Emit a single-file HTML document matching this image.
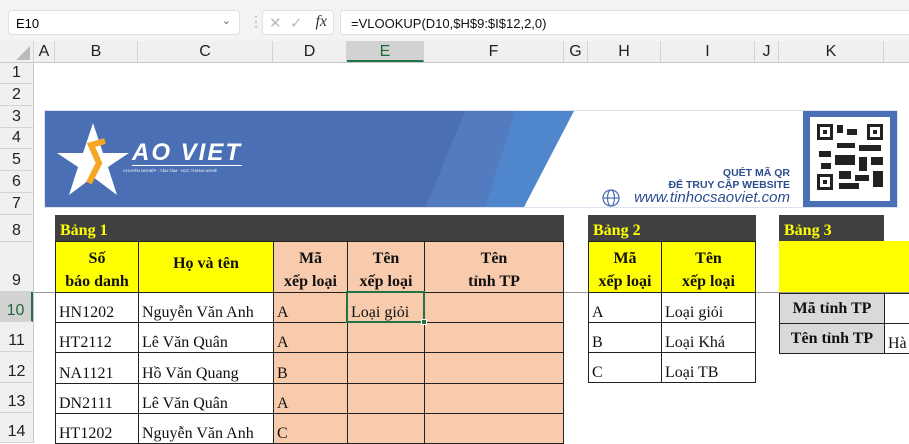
<!DOCTYPE html>
<html><head><meta charset="utf-8"><style>
*{margin:0;padding:0;box-sizing:border-box}
body{width:909px;height:443px;overflow:hidden;background:#fff;position:relative;font-family:"Liberation Serif",serif}
.a{position:absolute}
.s{font-family:"Liberation Sans",sans-serif}
.ch{position:absolute;top:41px;height:21px;border-right:1px solid #d4d4d4;background:#f0f0f0;font:16px "Liberation Sans",sans-serif;color:#222;text-align:center;line-height:21px}
.rh{position:absolute;left:0;width:33px;border-bottom:1px solid #d4d4d4;background:#f0f0f0;font:16px "Liberation Sans",sans-serif;color:#222;text-align:center;display:flex;align-items:flex-end;justify-content:center;padding-bottom:1px}
.c{position:absolute;border:1px solid #222;font-size:16px;color:#111;display:flex;align-items:flex-end;padding:0 3px 0 3px;line-height:19px}
.h{background:#ffff00;font-weight:bold;justify-content:center;text-align:center;align-items:center;line-height:23px;padding-top:5px}
.o{background:#f8cbad}
.dk{position:absolute;background:#404040;color:#ffff00;font-weight:bold;font-size:16px;padding:7px 0 0 5px;line-height:18px}
.gr{background:#d9d9d9;font-weight:bold;justify-content:center;align-items:center}
</style></head><body>
<div class="a" style="left:0;top:0;width:909px;height:41px;background:#f3f3f3"></div>
<div class="a s" style="left:8px;top:10px;width:232px;height:25px;background:#fff;border:1px solid #e0e0e0;border-radius:4px;font-size:13px;padding:5px 0 0 7px">E10<span style="position:absolute;right:8px;top:3px;color:#666;font-size:11px">&#8964;</span></div>
<div class="a s" style="left:249px;top:13px;color:#aaa;font-size:14px">&#8942;</div>
<div class="a" style="left:262px;top:10px;width:72px;height:25px;background:#fff;border:1px solid #e0e0e0;border-radius:4px;color:#bbb;font:15px 'Liberation Sans',sans-serif;padding:3px 0 0 6px">&#10005;&nbsp;&nbsp;&#10003;<span style="color:#333;font:italic 16px 'Liberation Serif',serif;position:absolute;right:6px;top:2px">fx</span></div>
<div class="a s" style="left:340px;top:10px;width:580px;height:25px;background:#fff;border:1px solid #e0e0e0;border-radius:4px;font-size:13px;padding:5px 0 0 10px;color:#111">=VLOOKUP(D10,$H$9:$I$12,2,0)</div>
<div class="ch" style="left:0;width:34px"><span style="position:absolute;left:16px;top:5px;width:0;height:0;border-left:14px solid transparent;border-bottom:14px solid #bbb"></span></div>
<div class="ch" style="left:34px;width:21px">A</div>
<div class="ch" style="left:55px;width:83px">B</div>
<div class="ch" style="left:138px;width:135px">C</div>
<div class="ch" style="left:273px;width:74px">D</div>
<div class="ch" style="left:347px;width:77px;background:#d2d2d2;color:#1e6b3a;border-bottom:2px solid #217346">E</div>
<div class="ch" style="left:424px;width:140px">F</div>
<div class="ch" style="left:564px;width:24px">G</div>
<div class="ch" style="left:588px;width:73px">H</div>
<div class="ch" style="left:661px;width:94px">I</div>
<div class="ch" style="left:755px;width:24px">J</div>
<div class="ch" style="left:779px;width:105px">K</div>
<div class="ch" style="left:884px;width:30px"></div>
<div class="a" style="left:0;top:62px;width:909px;height:1px;background:#c8c8c8"></div>
<div class="rh" style="top:63px;height:21px">1</div>
<div class="rh" style="top:84px;height:22px">2</div>
<div class="rh" style="top:106px;height:22px">3</div>
<div class="rh" style="top:128px;height:21px">4</div>
<div class="rh" style="top:149px;height:22px">5</div>
<div class="rh" style="top:171px;height:22px">6</div>
<div class="rh" style="top:193px;height:22px">7</div>
<div class="rh" style="top:215px;height:27px">8</div>
<div class="rh" style="top:242px;height:50px">9</div>
<div class="rh" style="top:292px;height:30px;background:#d2d2d2;color:#1e6b3a;border-right:2px solid #217346">10</div>
<div class="rh" style="top:322px;height:30px">11</div>
<div class="rh" style="top:352px;height:31px">12</div>
<div class="rh" style="top:383px;height:30px">13</div>
<div class="rh" style="top:413px;height:30px">14</div>
<div class="a" style="left:33px;top:62px;width:1px;height:381px;background:#c8c8c8"></div>
<div class="a" style="left:34px;top:292px;width:875px;height:1px;background:#999"></div>
<div class="a" style="left:44px;top:110px;width:854px;height:98px;background:#fff;border:1px solid #dde3ee;overflow:hidden">
<svg width="854" height="98" style="position:absolute;left:0;top:0">
<polygon points="0,0 480,0 440,98 0,98" fill="#4a6fb5"/>
<polygon points="420,0 500,0 460,98 380,98" fill="#5580c4" opacity="0.7"/>
<polygon points="470,0 529,0 478,98 440,98" fill="#4f86cc"/>
<rect x="758" y="0" width="96" height="98" fill="#4a6fb5"/>
<rect x="765" y="6" width="80" height="84" fill="#fff"/>
<g fill="#222">
<rect x="772" y="13" width="16" height="16"/><rect x="822" y="13" width="16" height="16"/><rect x="772" y="63" width="16" height="16"/>
<rect x="792" y="14" width="6" height="8"/><rect x="802" y="18" width="10" height="6"/><rect x="792" y="32" width="18" height="5"/><rect x="814" y="34" width="22" height="6"/>
<rect x="774" y="40" width="12" height="6"/><rect x="790" y="44" width="20" height="10"/><rect x="814" y="46" width="8" height="14"/><rect x="826" y="46" width="12" height="8"/>
<rect x="776" y="52" width="10" height="6"/><rect x="794" y="60" width="12" height="8"/><rect x="810" y="64" width="14" height="6"/><rect x="828" y="60" width="10" height="16"/><rect x="794" y="72" width="20" height="6"/>
</g>
<g fill="#fff"><rect x="775" y="16" width="10" height="10"/><rect x="825" y="16" width="10" height="10"/><rect x="775" y="66" width="10" height="10"/></g>
<g fill="#222"><rect x="778" y="19" width="4" height="4"/><rect x="828" y="19" width="4" height="4"/><rect x="778" y="69" width="4" height="4"/></g>
<polygon points="48,12 58,42 84,42 63,56 72,84 48,66 24,84 33,56 12,42 38,42" fill="#fff"/>
<path d="M60,30 L46,34 L54,52 L44,72" stroke="#f5a623" stroke-width="6" fill="none"/>
<circle cx="566" cy="87" r="8" fill="none" stroke="#4a6fb5" stroke-width="1.3"/>
<ellipse cx="566" cy="87" rx="3.5" ry="8" fill="none" stroke="#4a6fb5" stroke-width="1.2"/>
<line x1="558" y1="87" x2="574" y2="87" stroke="#4a6fb5" stroke-width="1.2"/>
</svg>
<div class="a s" style="left:87px;top:30px;color:#fff;font-size:24px;font-style:italic;font-weight:bold;letter-spacing:2px;border-bottom:1px solid #fff;line-height:24px">AO VIET</div>
<div class="a s" style="left:78px;top:57px;color:#fff;font-size:4px">CHUYÊN NGHIỆP · TẬN TÂM · HỌC THÀNH NGHỀ</div>
<div class="a s" style="left:550px;top:56px;width:195px;text-align:right;color:#2d4e91;font-size:10.5px;font-weight:bold;line-height:12px;white-space:nowrap">QUÉT MÃ QR<br>ĐỂ TRUY CẬP WEBSITE</div>
<div class="a s" style="left:570px;top:79px;width:175px;text-align:right;color:#2d4e91;font-size:15px;line-height:16px;font-style:italic;white-space:nowrap">www.tinhocsaoviet.com</div>
</div>
<div class="dk" style="left:55px;top:215px;width:509px;height:27px">Bảng 1</div>
<div class="c h" style="left:55px;top:241px;width:84px;height:52px">Số<br>báo danh</div>
<div class="c h" style="left:138px;top:241px;width:136px;height:52px;padding-bottom:12px">Họ và tên</div>
<div class="c h o" style="left:273px;top:241px;width:75px;height:52px">Mã<br>xếp loại</div>
<div class="c h o" style="left:347px;top:241px;width:78px;height:52px">Tên<br>xếp loại</div>
<div class="c h o" style="left:424px;top:241px;width:140px;height:52px">Tên<br>tỉnh TP</div>
<div class="c" style="left:55px;top:292px;width:84px;height:31px">HN1202</div>
<div class="c" style="left:138px;top:292px;width:136px;height:31px">Nguyễn Văn Anh</div>
<div class="c o" style="left:273px;top:292px;width:75px;height:31px">A</div>
<div class="c o" style="left:347px;top:292px;width:78px;height:31px">Loại giỏi</div>
<div class="c o" style="left:424px;top:292px;width:140px;height:31px"></div>
<div class="c" style="left:55px;top:322px;width:84px;height:31px">HT2112</div>
<div class="c" style="left:138px;top:322px;width:136px;height:31px">Lê Văn Quân</div>
<div class="c o" style="left:273px;top:322px;width:75px;height:31px">A</div>
<div class="c o" style="left:347px;top:322px;width:78px;height:31px"></div>
<div class="c o" style="left:424px;top:322px;width:140px;height:31px"></div>
<div class="c" style="left:55px;top:352px;width:84px;height:32px">NA1121</div>
<div class="c" style="left:138px;top:352px;width:136px;height:32px">Hồ Văn Quang</div>
<div class="c o" style="left:273px;top:352px;width:75px;height:32px">B</div>
<div class="c o" style="left:347px;top:352px;width:78px;height:32px"></div>
<div class="c o" style="left:424px;top:352px;width:140px;height:32px"></div>
<div class="c" style="left:55px;top:383px;width:84px;height:31px">DN2111</div>
<div class="c" style="left:138px;top:383px;width:136px;height:31px">Lê Văn Quân</div>
<div class="c o" style="left:273px;top:383px;width:75px;height:31px">A</div>
<div class="c o" style="left:347px;top:383px;width:78px;height:31px"></div>
<div class="c o" style="left:424px;top:383px;width:140px;height:31px"></div>
<div class="c" style="left:55px;top:413px;width:84px;height:31px">HT1202</div>
<div class="c" style="left:138px;top:413px;width:136px;height:31px">Nguyễn Văn Anh</div>
<div class="c o" style="left:273px;top:413px;width:75px;height:31px">C</div>
<div class="c o" style="left:347px;top:413px;width:78px;height:31px"></div>
<div class="c o" style="left:424px;top:413px;width:140px;height:31px"></div>
<div class="a" style="left:346px;top:291px;width:79px;height:32px;border:2px solid #217346"></div>
<div class="a" style="left:421px;top:319px;width:6px;height:6px;background:#217346;border:1px solid #fff"></div>
<div class="dk" style="left:588px;top:215px;width:168px;height:27px">Bảng 2</div>
<div class="c h" style="left:588px;top:241px;width:74px;height:52px">Mã<br>xếp loại</div>
<div class="c h" style="left:661px;top:241px;width:95px;height:52px">Tên<br>xếp loại</div>
<div class="c" style="left:588px;top:292px;width:74px;height:31px">A</div>
<div class="c" style="left:661px;top:292px;width:95px;height:31px">Loại giỏi</div>
<div class="c" style="left:588px;top:322px;width:74px;height:31px">B</div>
<div class="c" style="left:661px;top:322px;width:95px;height:31px">Loại Khá</div>
<div class="c" style="left:588px;top:352px;width:74px;height:31px">C</div>
<div class="c" style="left:661px;top:352px;width:95px;height:31px">Loại TB</div>
<div class="dk" style="left:779px;top:215px;width:105px;height:27px">Bảng 3</div>
<div class="a" style="left:779px;top:241px;width:130px;height:51px;background:#ffff00"></div>
<div class="c gr" style="left:779px;top:293px;width:106px;height:31px">Mã tỉnh TP</div>
<div class="c" style="left:884px;top:293px;width:30px;height:31px"></div>
<div class="c gr" style="left:779px;top:323px;width:106px;height:31px">Tên tỉnh TP</div>
<div class="c" style="left:884px;top:323px;width:30px;height:31px;border-right:none">Hà</div>
</body></html>
